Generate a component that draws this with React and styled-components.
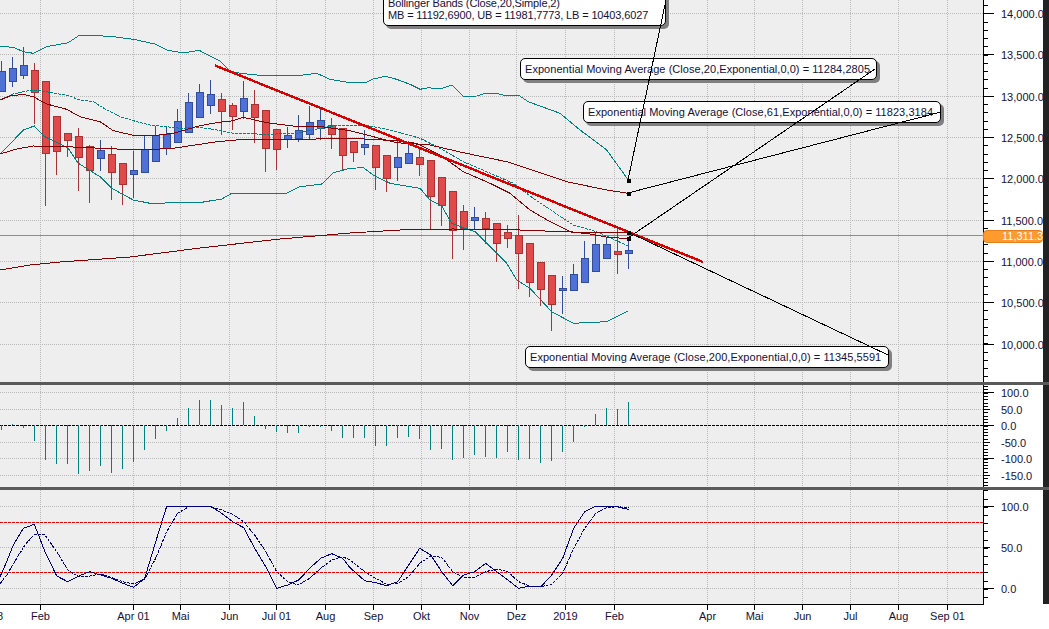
import React from "react";
import styled, { createGlobalStyle } from "styled-components";

const PLOT_WIDTH = 983;

const TEAL = "#008080";
const MAROON = "#850000";
const NAVY = "#000080";

// all series are noted in 3x pixels of the whole picture
const shift = (pts) => pts.map(([x, y]) => [x + 1050, y + 300]);

// [k, wick top, wick bottom, body top, body bottom]
const UP = "up";
const DOWN = "down";
const CANDLES = [
  [0, 180, 274, 214, 274, UP],
  [1, 168, 258, 205, 244, UP],
  [2, 138, 234, 196, 224, UP],
  [3, 186, 369, 211, 277, DOWN],
  [4, 244, 615, 244, 458, DOWN],
  [5, 349, 522, 349, 452, DOWN],
  [6, 400, 468, 400, 419, DOWN],
  [7, 381, 570, 409, 470, DOWN],
  [8, 433, 606, 439, 509, DOWN],
  [9, 417, 510, 451, 473, UP],
  [10, 435, 597, 463, 515, DOWN],
  [11, 490, 612, 490, 551, DOWN],
  [12, 450, 592, 511, 521, UP],
  [13, 405, 515, 448, 515, UP],
  [14, 375, 482, 406, 482, UP],
  [15, 378, 462, 403, 445, UP],
  [16, 324, 425, 364, 425, UP],
  [17, 276, 395, 307, 395, UP],
  [18, 250, 350, 277, 350, UP],
  [19, 237, 339, 283, 314, UP],
  [20, 277, 402, 298, 332, DOWN],
  [21, 307, 387, 316, 347, DOWN],
  [22, 240, 353, 295, 332, UP],
  [23, 267, 426, 313, 350, DOWN],
  [24, 331, 513, 331, 443, DOWN],
  [25, 388, 507, 388, 446, DOWN],
  [26, 377, 441, 405, 417, UP],
  [27, 342, 423, 391, 413, UP],
  [28, 315, 414, 367, 401, UP],
  [29, 325, 416, 361, 383, UP],
  [30, 351, 444, 374, 401, DOWN],
  [31, 385, 510, 385, 464, DOWN],
  [32, 420, 483, 424, 455, DOWN],
  [33, 387, 461, 432, 440, UP],
  [34, 436, 566, 436, 500, DOWN],
  [35, 466, 572, 466, 533, DOWN],
  [36, 415, 540, 472, 500, UP],
  [37, 420, 490, 460, 488, UP],
  [38, 440, 524, 472, 491, DOWN],
  [39, 481, 688, 481, 587, DOWN],
  [40, 532, 675, 532, 616, DOWN],
  [41, 574, 773, 574, 691, DOWN],
  [42, 612, 746, 634, 684, DOWN],
  [43, 618, 685, 652, 659, UP],
  [44, 634, 728, 655, 685, DOWN],
  [45, 670, 783, 670, 728, DOWN],
  [46, 672, 741, 697, 713, DOWN],
  [47, 642, 863, 706, 758, DOWN],
  [48, 730, 887, 730, 845, DOWN],
  [49, 787, 915, 787, 866, DOWN],
  [50, 826, 989, 826, 911, DOWN],
  [51, 825, 938, 865, 869, UP],
  [52, 789, 869, 823, 869, UP],
  [53, 720, 845, 775, 845, UP],
  [54, 695, 812, 733, 812, UP],
  [55, 708, 773, 733, 773, UP],
  [56, 685, 818, 754, 761, DOWN],
  [57, 720, 803, 751, 758, UP],
];

const UPPER_BAND = [
  [0, 139], [40, 142], [70, 155], [100, 160], [140, 140], [205, 128], [235, 108], [280, 106],
  [340, 110], [400, 118], [465, 132], [500, 150], [550, 159], [597, 151], [660, 183], [690, 213],
  [720, 220], [780, 226], [885, 228], [950, 220], [990, 238], [1020, 243], [1045, 247], [1098, 247],
  [1120, 237], [1155, 229], [1190, 238], [1230, 253], [1260, 268], [1285, 263], [1320, 267],
  [1355, 255], [1390, 289], [1430, 288], [1455, 280], [1490, 280], [1520, 288], [1555, 285],
  [1585, 305], [1620, 318], [1680, 340], [1740, 390], [1820, 450], [1885, 540],
];

const MIDDLE_BAND = [
  [0, 300], [40, 282], [70, 275], [100, 270], [140, 275], [205, 287], [240, 300], [280, 305],
  [320, 330], [360, 350], [400, 362], [450, 375], [500, 380], [540, 385], [600, 382], [650, 390],
  [700, 400], [800, 403], [890, 400], [960, 385], [1000, 378], [1050, 375],
  ...shift([
    [60, 78], [130, 92], [210, 115], [270, 145], [340, 185], [410, 215], [490, 250], [550, 295],
    [610, 335], [670, 375], [740, 395], [835, 438],
  ]),
];

const LOWER_BAND = [
  [0, 462], [30, 432], [70, 390], [103, 378], [135, 410], [205, 445], [235, 490], [300, 530],
  [335, 565], [400, 600], [450, 610], [605, 607], [665, 597], [695, 580], [860, 580], [900, 560],
  [965, 552], [1000, 518], [1050, 505],
  ...shift([
    [40, 203], [70, 225], [120, 250], [210, 265], [240, 300], [275, 318], [305, 370], [345, 385],
    [375, 395], [470, 490], [500, 540], [540, 565], [605, 635], [670, 670], [770, 665], [835, 632],
  ]),
];

const EMA_61 = [
  [0, 300], [30, 288], [70, 283], [100, 290], [140, 312], [200, 328], [240, 350], [300, 365],
  [340, 392], [400, 406], [470, 406], [520, 400], [600, 377], [650, 368], [700, 362], [730, 352],
  [800, 368], [880, 378], [950, 378], [1000, 385], [1050, 392],
  ...shift([
    [140, 128], [240, 135], [340, 158], [470, 185], [540, 208], [650, 245], [770, 270], [835, 280],
  ]),
];

const EMA_20 = [
  [0, 462], [50, 447], [100, 438], [200, 440], [330, 446], [420, 450], [520, 445], [650, 425],
  [720, 419], [850, 419], [1050, 415],
  ...shift([
    [60, 118], [140, 122], [200, 130], [270, 165], [340, 215], [420, 250], [480, 280], [540, 330],
    [600, 365], [660, 395], [720, 402], [780, 413], [835, 415],
  ]),
];

const EMA_200 = [
  [0, 810], [90, 795], [180, 786], [390, 771], [600, 744], [840, 717], [1050, 699], [1200, 690],
  [1359, 687], [1560, 690], [1710, 696], [1885, 698],
];

const HIST = [
  165, 148, 158, 198, 255, 267, 267, 297, 288, 273, 294, 282, 261, 225, 192, 168, 129, 99, 75, 75,
  90, 99, 81, 123, 162, 171, 174, 174, 156, 155, 168, 189, 189, 189, 213, 213, 189, 186, 192, 225,
  222, 255, 249, 240, 246, 249, 231, 255, 252, 264, 258, 231, 202, 156, 117, 99, 102, 81,
];

const STOCH_MAIN = [
  [0, 605], [20, 560], [40, 510], [70, 460], [103, 448], [135, 530], [170, 603], [203, 620],
  [236, 603], [269, 590], [302, 600], [335, 610], [368, 625], [401, 637], [434, 610], [467, 500],
  [500, 394], [632, 394], [665, 415], [698, 440], [731, 458], [764, 520], [797, 575], [830, 640],
  [863, 630], [896, 615], [929, 580], [962, 550], [995, 536], [1028, 550], [1050, 578],
  [1094, 617], [1127, 623], [1160, 632], [1193, 620], [1226, 570], [1259, 520], [1292, 540],
  [1325, 590], [1358, 632], [1391, 600], [1424, 590], [1457, 565], [1490, 590], [1523, 615],
  [1556, 640], [1589, 633], [1622, 636], [1655, 600], [1688, 550], [1721, 460], [1754, 410],
  [1787, 394], [1820, 394], [1853, 396], [1886, 403],
];

const STOCH_SIGNAL = [
  [0, 627], [20, 600], [50, 550], [75, 510], [103, 478], [135, 480], [170, 530], [203, 585],
  [236, 605], [269, 603], [302, 597], [335, 608], [368, 620], [401, 627], [434, 612], [467, 550],
  [500, 470], [533, 415], [566, 395], [632, 396], [665, 405], [698, 418], [731, 440], [764, 480],
  [797, 530], [830, 590], [863, 620], [896, 630], [929, 610], [962, 580], [995, 555], [1028, 545],
  [1050, 555], [1094, 590], [1127, 610], [1160, 628], [1193, 625], [1226, 605], [1259, 565],
  [1292, 543], [1325, 547], [1358, 590], [1391, 607], [1424, 607], [1457, 590], [1490, 582],
  [1523, 590], [1556, 620], [1589, 633], [1622, 635], [1655, 628], [1688, 595], [1721, 520],
  [1754, 460], [1787, 415], [1820, 398], [1853, 395], [1886, 398],
];

const TIME_TICKS = [
  ["2018", -9], ["Feb", 40.5], ["Apr 01", 133.5], ["Mai", 180.5], ["Jun", 229.5], ["Jul 01", 276.5],
  ["Aug", 325.5], ["Sep", 373.5], ["Okt", 421.5], ["Nov", 469.5], ["Dez", 516.5], ["2019", 565.5],
  ["Feb", 614.5], ["Apr", 707.5], ["Mai", 754.5], ["Jun", 802.5], ["Jul", 850.5], ["Aug", 898.5],
  ["Sep 01", 947.5],
];

const PRICE_LEVELS = [
  ["14,000.0", 13.5], ["13,500.0", 54.5], ["13,000.0", 96.5], ["12,500.0", 137.5], ["12,000.0", 178.5],
  ["11,500.0", 220.5], ["11,000.0", 261.5], ["10,500.0", 302.5], ["10,000.0", 344.5],
];

const OSC_LEVELS = [
  ["100.0", 7.5, 11], ["50.0", 24.5, 7], ["0.0", 40.5, 11], ["-50.0", 57.5, 7], ["-100.0", 73.5, 11],
  ["-150.0", 90.5, 7],
];

const STOCH_LEVELS = [
  ["100.0", 16.5, 11], ["50.0", 57.5, 7], ["0.0", 98.5, 11],
];

const toPoints = (pts, top) =>
  pts.map(([x, y]) => `${(x / 3).toFixed(1)},${(y / 3 - top).toFixed(1)}`).join(" ");

const px = (v, top = 0) => Math.round(v / 3) - top + 0.5;

const range = (start, end, step) => {
  const out = [];
  for (let v = start; v < end; v += step) out.push(v);
  return out;
};

function PlotGrid({ height, levels }) {
  return (
    <g stroke="#b9b9b9" strokeDasharray="1 1">
      {TIME_TICKS.map(([label, x]) => (
        <line key={label + x} x1={x} x2={x} y1={0} y2={height} />
      ))}
      {levels.map((level) => (
        <line key={level[0]} x1={0} x2={PLOT_WIDTH} y1={level[1]} y2={level[1]} />
      ))}
    </g>
  );
}

function Candle({ k, wickTop, wickBottom, bodyTop, bodyBottom, side }) {
  const x = 1.5 + 11 * k;
  const up = side === UP;
  const edge = up ? "#314c98" : "#a83333";
  return (
    <g>
      <line x1={x} x2={x} y1={px(wickTop)} y2={px(wickBottom)} stroke={edge} />
      <rect
        x={x - 3}
        y={px(bodyTop)}
        width={7}
        height={Math.max(px(bodyBottom) - px(bodyTop), 1)}
        fill={up ? "#4f70d6" : "#e04a4a"}
        stroke={edge}
      />
    </g>
  );
}

function ValueAxis({ height, levels, start, step }) {
  return (
    <AxisSvg height={height}>
      <line x1={0.5} x2={0.5} y1={0} y2={height} stroke="#000" />
      {range(start, height, step).map((y) => (
        <line key={y} x1={0} x2={4.5} y1={Math.round(y) + 0.5} y2={Math.round(y) + 0.5} stroke="#000" />
      ))}
      {levels.map(([label, y, tick = 11]) => (
        <g key={label}>
          <line x1={0} x2={tick} y1={y} y2={y} stroke="#000" />
          <AxisLabel x={18} y={y + 4}>
            {label}
          </AxisLabel>
        </g>
      ))}
    </AxisSvg>
  );
}

export default function App() {
  return (
    <Page>
      <GlobalStyle />

      <Pane $height={382}>
        <PlotSvg height={382}>
          <PlotGrid height={382} levels={PRICE_LEVELS} />
          <line x1={0} x2={PLOT_WIDTH} y1={235.5} y2={235.5} stroke="#d97c1e" />
          {CANDLES.map(([k, a, b, c, d, side]) => (
            <Candle key={k} k={k} wickTop={a} wickBottom={b} bodyTop={c} bodyBottom={d} side={side} />
          ))}
          <polyline points={toPoints(UPPER_BAND, 0)} fill="none" stroke={TEAL} />
          <polyline points={toPoints(LOWER_BAND, 0)} fill="none" stroke={TEAL} />
          <polyline points={toPoints(MIDDLE_BAND, 0)} fill="none" stroke={TEAL} strokeDasharray="3 1" />
          <polyline points={toPoints(EMA_61, 0)} fill="none" stroke={MAROON} />
          <polyline points={toPoints(EMA_20, 0)} fill="none" stroke={MAROON} />
          <polyline points={toPoints(EMA_200, 0)} fill="none" stroke={MAROON} />
          <line x1={215} y1={65.5} x2={703} y2={262} stroke="#d90000" strokeWidth={2.4} />
        </PlotSvg>
        <AxisBox>
          <ValueAxis height={382} levels={PRICE_LEVELS} start={5} step={8.25} />
          <PriceBadge>11,311.3</PriceBadge>
        </AxisBox>
        <Strip />
      </Pane>
      <Divider />

      <Pane $height={102}>
        <PlotSvg height={102}>
          <PlotGrid height={102} levels={OSC_LEVELS} />
          <line x1={0} x2={PLOT_WIDTH} y1={40.5} y2={40.5} stroke="#000" strokeDasharray="3 1" />
          {HIST.map((v, k) => (
            <line key={k} x1={1.5 + 11 * k} x2={1.5 + 11 * k} y1={40} y2={Math.round(v / 3 - 10)} stroke={TEAL} />
          ))}
        </PlotSvg>
        <AxisBox>
          <ValueAxis height={102} levels={OSC_LEVELS} start={1} step={3.3} />
        </AxisBox>
        <Strip />
      </Pane>
      <Divider />

      <Pane $height={114}>
        <PlotSvg height={114}>
          <PlotGrid height={114} levels={STOCH_LEVELS} />
          <line x1={0} x2={PLOT_WIDTH} y1={32.5} y2={32.5} stroke="#e60000" strokeDasharray="3 1" />
          <line x1={0} x2={PLOT_WIDTH} y1={82.5} y2={82.5} stroke="#e60000" strokeDasharray="3 1" />
          <polyline points={toPoints(STOCH_MAIN, 115)} fill="none" stroke={NAVY} />
          <polyline points={toPoints(STOCH_SIGNAL, 115)} fill="none" stroke={NAVY} strokeDasharray="3 1" />
        </PlotSvg>
        <AxisBox>
          <ValueAxis height={114} levels={STOCH_LEVELS} start={0.3} step={8.2} />
        </AxisBox>
        <Strip />
      </Pane>

      <TimeRow>
        <TimeSvg>
          <line x1={0} x2={PLOT_WIDTH + 1} y1={0.5} y2={0.5} stroke="#000" />
          {TIME_TICKS.map(([label, x]) => (
            <g key={label + x}>
              <line x1={x} x2={x} y1={0} y2={6} stroke="#000" />
              <TimeLabel x={x} y={16}>
                {label}
              </TimeLabel>
            </g>
          ))}
        </TimeSvg>
      </TimeRow>

      <Callout $left={383} $top={-14} $width={283} $height={40} $spacing={-0.14}>
        <div>Bollinger Bands (Close,20,Simple,2)</div>
        <div>MB = 11192,6900, UB = 11981,7773, LB = 10403,6027</div>
      </Callout>
      <Callout $left={520} $top={58} $width={357} $height={22} $spacing={0.05}>
        Exponential Moving Average (Close,20,Exponential,0,0) = 11284,2805
      </Callout>
      <Callout $left={583} $top={101} $width={358} $height={22} $spacing={0.05}>
        Exponential Moving Average (Close,61,Exponential,0,0) = 11823,3184
      </Callout>
      <Callout $left={525} $top={346} $width={364} $height={22} $spacing={0.05}>
        Exponential Moving Average (Close,200,Exponential,0,0) = 11345,5591
      </Callout>

      <Leaders viewBox="0 0 1049 629">
        <line x1={628} y1={180} x2={666} y2={0} />
        <line x1={628} y1={193} x2={941} y2={112} />
        <line x1={628} y1={238} x2={875} y2={69} />
        <line x1={628} y1={232} x2={888} y2={355} />
        <rect x={627} y={179} width={3} height={3} />
        <rect x={627} y={192} width={3} height={3} />
        <rect x={627} y={231} width={3} height={3} />
        <rect x={627} y={237} width={3} height={3} />
      </Leaders>
    </Page>
  );
}

const GlobalStyle = createGlobalStyle`
  html, body {
    margin: 0;
    padding: 0;
    background: #ffffff;
    overflow: hidden;
  }
`;

const Page = styled.div`
  position: relative;
  display: flex;
  flex-direction: column;
  width: 1049px;
  height: 629px;
  overflow: hidden;
  font-family: "Liberation Sans", Arial, sans-serif;
`;

const Pane = styled.div`
  display: flex;
  height: ${(p) => p.$height}px;
  flex: none;
`;

const PlotSvg = styled.svg.attrs({ width: PLOT_WIDTH, shapeRendering: "crispEdges" })`
  display: block;
  flex: none;
  background: #eeeeee;
`;

const AxisBox = styled.div`
  position: relative;
  width: 60px;
  flex: none;
  overflow: hidden;
  background: #ffffff;
`;

const AxisSvg = styled.svg.attrs({ width: 60, shapeRendering: "crispEdges" })`
  display: block;
`;

const AxisLabel = styled.text`
  font-family: "Liberation Sans", Arial, sans-serif;
  font-size: 11px;
  fill: #14103c;
`;

const PriceBadge = styled.div`
  position: absolute;
  top: 230px;
  left: 0;
  width: 60px;
  height: 13px;
  box-sizing: border-box;
  padding-left: 18px;
  background: #ff9a2e;
  border: 1px solid #e5811c;
  border-radius: 4px;
  color: #ffffff;
  font-size: 11px;
  line-height: 11px;
  white-space: nowrap;
`;

const Strip = styled.div`
  flex: 1;
  background: #222222;
`;

const Divider = styled.div`
  height: 3px;
  flex: none;
  background: #5a5a5a;
`;

const TimeRow = styled.div`
  flex: 1;
  background: #ffffff;
`;

const TimeSvg = styled.svg.attrs({ width: PLOT_WIDTH + 1, height: 25, shapeRendering: "crispEdges" })`
  display: block;
`;

const TimeLabel = styled.text`
  font-family: "Liberation Sans", Arial, sans-serif;
  font-size: 11px;
  fill: #14103c;
  text-anchor: middle;
`;

const Callout = styled.div`
  position: absolute;
  left: ${(p) => p.$left}px;
  top: ${(p) => p.$top}px;
  width: ${(p) => p.$width}px;
  height: ${(p) => p.$height}px;
  box-sizing: border-box;
  display: flex;
  flex-direction: column;
  justify-content: flex-end;
  padding: 0 4px 4px;
  background: #ffffff;
  border: 1px solid #000000;
  border-radius: 5px;
  box-shadow: 3px 3px 0 #808080;
  color: #14103c;
  font-size: 11px;
  line-height: 12px;
  letter-spacing: ${(p) => p.$spacing}px;
  white-space: nowrap;
`;

const Leaders = styled.svg.attrs({ width: 1049, height: 629, shapeRendering: "crispEdges" })`
  position: absolute;
  left: 0;
  top: 0;
  pointer-events: none;
  stroke: #000000;
  fill: #000000;
`;
